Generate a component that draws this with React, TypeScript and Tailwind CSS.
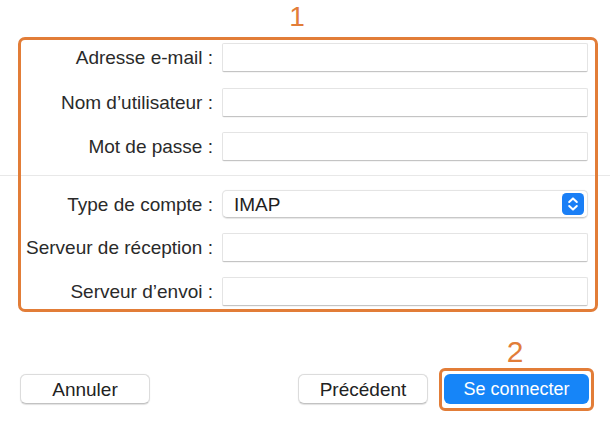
import React from 'react';

const Field: React.FC<{ label: string }> = ({ label }) => (
  <>
    <label className="justify-self-end self-center text-[19px] leading-none text-[#2a2a2a] whitespace-nowrap">{label}</label>
    <div className="h-[29px] rounded-[2px] bg-white border border-[#e4e4e4] border-b-[#c4c4c4] shadow-[0_0.5px_0.5px_rgba(0,0,0,0.08)]" />
  </>
);

const Stepper: React.FC = () => (
  <svg width="22" height="22" viewBox="0 0 22 22">
    <rect x="0" y="0" width="22" height="22" rx="4.5" fill="#1a7ff6" />
    <path d="M7.2 9 L11 5.4 L14.8 9" fill="none" stroke="white" strokeWidth="2" strokeLinecap="round" strokeLinejoin="round" />
    <path d="M7.2 13 L11 16.6 L14.8 13" fill="none" stroke="white" strokeWidth="2" strokeLinecap="round" strokeLinejoin="round" />
  </svg>
);

const App: React.FC = () => {
  return (
    <div className="relative w-[610px] h-[426px] overflow-hidden bg-white font-['Liberation_Sans',Arial,sans-serif]">
      {/* form */}
      <div className="pt-[43px]">
        <div className="grid grid-cols-[213px_366px] gap-x-[9px] gap-y-[15.5px]">
          <Field label="Adresse e-mail :" />
          <Field label="Nom d’utilisateur :" />
          <Field label="Mot de passe :" />
        </div>

        <div className="mt-[14px] mb-[14px] h-px bg-[#e8e8e8]" />

        <div className="grid grid-cols-[213px_366px] gap-x-[9px] gap-y-[15px]">
          <label className="justify-self-end self-center text-[19px] leading-none text-[#2a2a2a]">Type de compte :</label>
          <div className="h-[28px] flex items-center justify-between pl-[11px] pr-[3px] rounded-[5px] bg-white border border-[#e4e4e4] border-b-[#c8c8c8] shadow-[0_0.5px_1px_rgba(0,0,0,0.1)]">
            <span className="text-[19px] leading-none text-[#1e1e1e]">IMAP</span>
            <Stepper />
          </div>
          <Field label="Serveur de réception :" />
          <Field label="Serveur d’envoi :" />
        </div>
      </div>

      {/* buttons */}
      <div className="mt-[68px] flex items-center pl-[20px] pr-[21px]">
        <button className="w-[130px] h-[30px] rounded-[6px] bg-white border border-[#dcdcdc] border-b-[#c2c2c2] shadow-[0_0.5px_1px_rgba(0,0,0,0.12)] text-[19px] leading-none text-[#222]">
          Annuler
        </button>
        <div className="flex-1" />
        <button className="w-[130px] h-[30px] rounded-[6px] bg-white border border-[#dcdcdc] border-b-[#c2c2c2] shadow-[0_0.5px_1px_rgba(0,0,0,0.12)] text-[19px] leading-none text-[#222]">
          Précédent
        </button>
        <button className="ml-[16px] w-[145px] h-[30px] -mt-[1px] rounded-[6px] bg-[#1685f8] text-[18px] leading-none text-white">
          Se connecter
        </button>
      </div>

      {/* annotations */}
      <div className="absolute left-[277px] top-[3px] w-[40px] text-center text-[28px] leading-none text-[#e27d38]">1</div>
      <div className="absolute left-[18px] top-[37px] w-[580px] h-[275px] border-[3.5px] border-[#e27d38] rounded-[7px]" />
      <div className="absolute left-[495px] top-[337px] w-[40px] text-center text-[30px] leading-none text-[#e27d38]">2</div>
      <div className="absolute left-[439px] top-[368px] w-[155px] h-[43px] border-[3.5px] border-[#e27d38] rounded-[6px]" />
    </div>
  );
};

export default App;
